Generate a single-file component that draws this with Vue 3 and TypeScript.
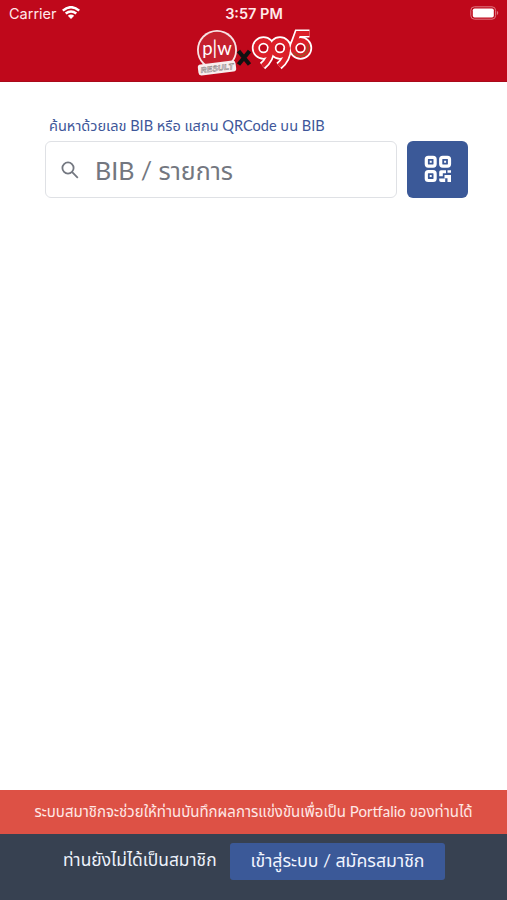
<script setup lang="ts">
import { ref } from 'vue'

const query = ref('')
</script>

<template>
  <main class="screen">
    <header class="header">
      <div class="status">
        <div class="carrier">
          <span>Carrier</span>
          <svg class="wifi" viewBox="0 0 18 14" width="18" height="14">
            <path d="M.8 4.6Q9-2.2 17.2 4.6" />
            <path d="M3.7 7.6Q9 3.4 14.3 7.6" />
            <path class="solid" d="M5.8 9.7Q9 7.4 12.2 9.7L9 13Z" />
          </svg>
        </div>
        <span class="time">3:57 PM</span>
        <svg class="battery" viewBox="0 0 30 14" width="30" height="14">
          <rect class="shell" x=".8" y=".8" width="24.8" height="12.4" rx="3.6" />
          <rect class="charge" x="2.8" y="2.4" width="21" height="9.2" rx="1.8" />
          <path class="tip" d="M26.9 4.8Q29.6 7 26.9 9.2Z" />
        </svg>
      </div>
      <svg class="logo" viewBox="0 0 120 50" width="120" height="50">
        <circle cx="23" cy="23" r="20" fill="#f8e3e4" />
        <circle cx="23" cy="23" r="18.2" fill="#c5202d" />
        <text class="pw" x="23" y="28" text-anchor="middle">p|w</text>
        <g transform="rotate(-7 23 41)">
          <rect x="4" y="35.5" width="38" height="11" rx="3" fill="#f8eeee" />
          <text class="result" x="6.5" y="44" textLength="33">RESULT</text>
        </g>
        <path class="cross" d="m44.5 24 11 13.5M55.5 24 44.5 37.5" />
        <g class="digits halo">
          <circle cx="69.5" cy="21" r="7.6" />
          <path d="M77.100 21q0 11-8.600 18" />
          <circle cx="86" cy="21" r="7.6" />
          <path d="M93.600 21q0 11-8.600 18" />
          <path d="M115.500 6.500h-11.500l-4 11" />
          <circle cx="106.500" cy="21" r="7.6" />
        </g>
        <g class="digits">
          <circle cx="69.5" cy="21" r="7.6" />
          <path d="M77.100 21q0 11-8.600 18" />
          <path class="edge" d="M79.300 25.500a7.600 7.600 0 0 1 0-9" />
          <circle cx="86" cy="21" r="7.6" />
          <path d="M93.600 21q0 11-8.600 18" />
          <path d="M115.500 6.500h-11.500l-4 11" />
          <circle cx="106.500" cy="21" r="7.6" />
          <path class="shade" d="M113.500 17q2 8-5 11.500-6 1-9-3" />
        </g>
      </svg>
    </header>

    <section class="search">
      <label class="label" for="bib">ค้นหาด้วยเลข BIB หรือ แสกน QRCode บน BIB</label>
      <div class="row">
        <div class="field">
          <svg viewBox="0 0 18 18" width="18" height="18">
            <circle cx="7" cy="7" r="5.6" />
            <path d="m11.2 11.2 5.600 5.600" />
          </svg>
          <input id="bib" v-model="query" type="text" placeholder="BIB / รายการ" />
        </div>
        <button class="scan" type="button" aria-label="QRCode">
          <svg viewBox="0 0 28 28" width="28" height="28">
            <rect x="2.3" y="2.3" width="8.8" height="8.8" rx="2" />
            <rect x="16.7" y="2.3" width="8.8" height="8.8" rx="2" />
            <rect x="2.3" y="16.7" width="8.8" height="8.8" rx="2" />
            <path class="dots" d="M5.700 5.700h2v2h-2zM20.100 5.700h2v2h-2zM5.700 20.100h2v2h-2zM15.200 17q0-1.800 1.800-1.800H22v3h-3.200v3h-3.600zM23.500 15.200H27v2.600h-3.500zM20.500 20H27v7h-3.500v-3.800h-3zM15.200 23.500h6V27H17q-1.800 0-1.800-1.800z" />
          </svg>
        </button>
      </div>
    </section>

    <footer>
      <p class="notice">ระบบสมาชิกจะช่วยให้ท่านบันทึกผลการแข่งขันเพื่อเป็น Portfalio ของท่านได้</p>
      <div class="member">
        <span class="question">ท่านยังไม่ได้เป็นสมาชิก</span>
        <button class="login" type="button">เข้าสู่ระบบ / สมัครสมาชิก</button>
      </div>
    </footer>
  </main>
</template>

<style>
body {
  background: #fff;
}
</style>

<style scoped>
* {
  box-sizing: border-box;
}
.screen {
  height: 900px;
  display: flex;
  flex-direction: column;
  overflow: hidden;
  font-family: Lato, "Noto Sans", "Noto Sans Thai", sans-serif;
}
.header {
  height: 82px;
  flex: none;
  background: #bf081b;
  border-bottom: 1px solid #a90a1a;
  display: flex;
  flex-direction: column;
  align-items: center;
}
.status {
  width: 100%;
  height: 27px;
  flex: none;
  padding: 0 7px 0 9px;
  display: grid;
  grid-template-columns: 1fr auto 1fr;
  align-items: center;
  color: #ffe9ea;
  font: 14.5px Inter, sans-serif;
}
.carrier {
  display: flex;
  align-items: center;
  gap: 5px;
}
.wifi {
  margin-top: -2px;
  fill: none;
  stroke: #fff;
  stroke-width: 2.5;
}
.wifi .solid {
  fill: #fff;
  stroke: none;
}
.time {
  margin-right: 1px;
  font-weight: 600;
}
.battery {
  justify-self: end;
  margin-top: -1px;
}
.shell {
  fill: none;
  stroke: #df7882;
  stroke-width: 1;
}
.charge {
  fill: #fff;
}
.tip {
  fill: #df7882;
}
.pw {
  font: 18.5px Lato, sans-serif;
  fill: #fff;
}
.result {
  font: italic bold 8px "Liberation Sans", sans-serif;
  fill: #fff;
  stroke: #8f8585;
  stroke-width: .6;
}
.cross {
  fill: none;
  stroke: #111;
  stroke-width: 4.2;
}
.digits {
  fill: none;
  stroke: #dc1f29;
  stroke-width: 4.8;
}
.halo {
  stroke: #fff;
  stroke-width: 8.2;
}
.digits .edge {
  stroke: #f3b3b4;
  stroke-width: 1;
}
.digits .shade {
  stroke: #9c5226;
  stroke-width: 1.6;
}
.search {
  flex: 1;
  padding: 33px 39px 0 45px;
}
.label {
  display: block;
  height: 26px;
  padding-left: 4px;
  line-height: 22px;
  font-size: 14.55px;
  color: #40579a;
  white-space: nowrap;
}
.row {
  display: flex;
  gap: 10px;
}
.field {
  width: 352px;
  height: 57px;
  border: 1px solid #dfe1e5;
  border-radius: 6px;
  padding-left: 15px;
  display: flex;
  align-items: center;
  gap: 16px;
}
.field svg {
  flex: none;
  fill: none;
  stroke: #737780;
  stroke-width: 1.8;
}
.field input {
  flex: 1;
  min-width: 0;
  border: 0;
  outline: 0;
  padding: 0;
  background: none;
  font: 25px Lato, "Noto Sans", "Noto Sans Thai", sans-serif;
}
.field input::placeholder {
  color: #737780;
  opacity: 1;
}
.scan {
  width: 61px;
  height: 57px;
  border: 0;
  border-radius: 6px;
  padding: 0 0 2px;
  background: #3b5998;
  display: flex;
  align-items: center;
  justify-content: center;
}
.scan svg {
  fill: none;
  stroke: #fff;
  stroke-width: 3.2;
}
.scan .dots {
  fill: #fff;
  stroke: none;
}
.notice {
  height: 44px;
  margin: 0;
  background: #dd5145;
  color: #ffe8e5;
  display: flex;
  align-items: center;
  justify-content: center;
  font-size: 15px;
  white-space: nowrap;
}
.member {
  height: 66px;
  background: #374151;
  padding: 9px 0 0 63px;
  display: flex;
  align-items: flex-start;
  gap: 14px;
  white-space: nowrap;
}
.question {
  width: 153px;
  line-height: 34px;
  font-size: 17.4px;
  color: #edf2fb;
}
.login {
  width: 215px;
  height: 37px;
  border: 0;
  border-radius: 3px;
  padding: 0;
  background: #3b5998;
  color: #f2f5ff;
  font: 17.7px Lato, "Noto Sans", "Noto Sans Thai", sans-serif;
}
</style>
